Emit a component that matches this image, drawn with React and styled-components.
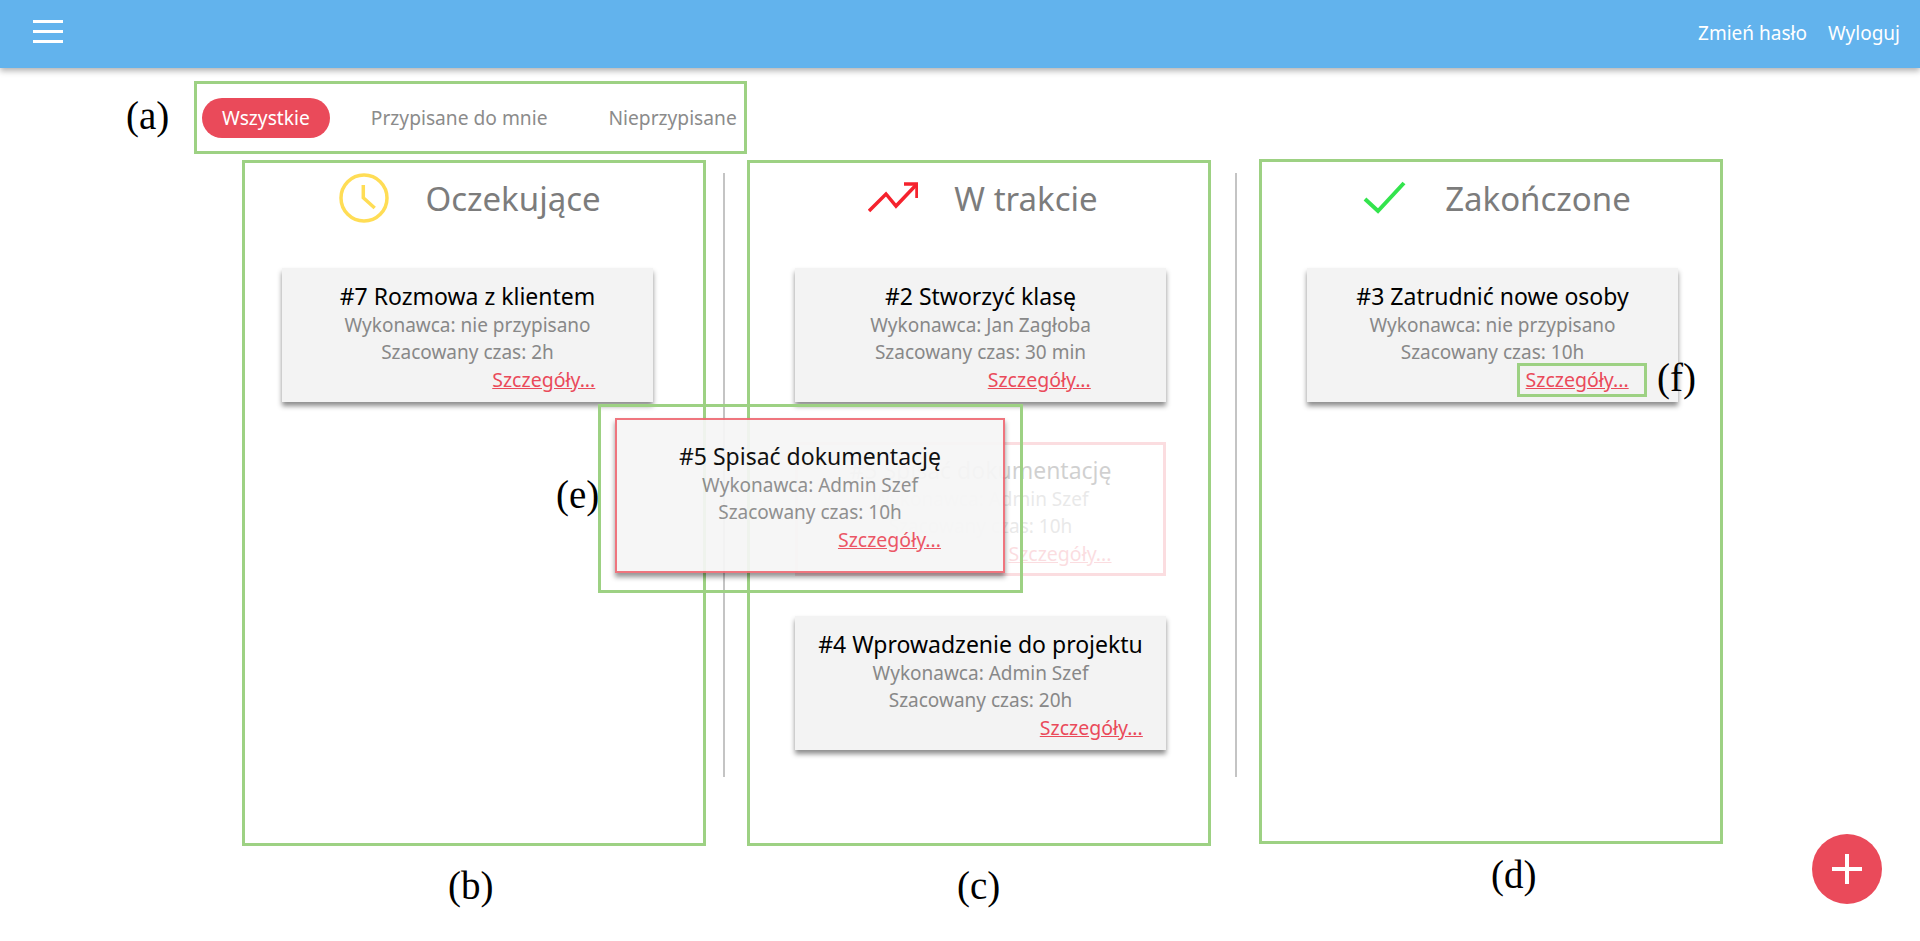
import React from 'react';
import styled, { createGlobalStyle } from 'styled-components';

const GlobalStyle = createGlobalStyle`
  html, body {
    margin: 0;
    background: #fff;
    font-family: "Noto Sans", "Open Sans", sans-serif;
  }
  * { box-sizing: border-box; }
`;

const Page = styled.div`
  position: relative;
  height: 941px;
  overflow: hidden;
`;

const TopBar = styled.header`
  height: 68px;
  background: #62b3ed;
  box-shadow: 0 3px 6px rgba(0, 0, 0, 0.3);
  display: flex;
  align-items: center;
  justify-content: space-between;
  padding: 0 20px 0 33px;
`;

const Burger = styled.div`
  width: 30px;
  display: flex;
  flex-direction: column;
  gap: 7px;
  margin-top: -5px;
  span {
    display: block;
    height: 3px;
    background: #fff;
  }
`;

const TopLinks = styled.nav`
  display: flex;
  gap: 21px;
  margin-top: -2px;
`;

const TopLink = styled.a`
  color: #fff;
  font-size: 19px;
`;

const FilterBar = styled.div`
  display: flex;
  align-items: center;
  margin: 30px 0 0 202px;
  height: 40px;
`;

const FilterPill = styled.div`
  height: 40px;
  line-height: 40px;
  padding: 0 20px;
  margin-right: 21px;
  border-radius: 20px;
  font-size: 19.2px;
  white-space: nowrap;
  color: ${p => (p.$active ? '#fff' : '#8b8b8b')};
  background: ${p => (p.$active ? '#ea4a5a' : 'transparent')};
`;

const Board = styled.main`
  display: flex;
  margin: 22px 0 0 242px;
`;

const Column = styled.section`
  width: 464px;
  height: ${p => p.$height}px;
  margin-top: ${p => p.$top}px;
  padding: ${p => 10 - p.$top}px 0 0 ${p => p.$inset - 3}px;
  border: 3px solid #9dd183;
`;

const Divider = styled.div`
  width: 2px;
  height: 604px;
  margin: 13px ${p => p.$right}px 0 ${p => p.$left}px;
  background: #c4c4c4;
`;

const ColumnInner = styled.div`
  width: 371px;
`;

const ColumnHead = styled.div`
  height: 50px;
  display: flex;
  align-items: center;
  justify-content: center;
  gap: 36px;
  padding-left: 5px;
  margin-bottom: 45px;
`;

const HeadIcon = styled.svg`
  width: 50px;
  height: 50px;
  flex: none;
`;

const HeadTitle = styled.h2`
  margin: 0;
  font-size: 33px;
  font-weight: 400;
  color: #7c7c7c;
`;

const CardStack = styled.div`
  display: flex;
  flex-direction: column;
  gap: 40px;
`;

const Card = styled.article`
  display: flex;
  justify-content: center;
  align-items: flex-start;
  width: 371px;
  height: 134px;
  padding-top: 12px;
  background: #f3f3f3;
  box-shadow: 0 4px 5px rgba(0, 0, 0, 0.45);
`;

const GhostCard = styled(Card)`
  background: #fff;
  border: 3px solid #ea4a5a;
  padding-top: 9px;
  box-shadow: none;
  opacity: 0.18;
`;

const FloatingCard = styled(Card)`
  position: absolute;
  left: 615px;
  top: 418px;
  width: 390px;
  height: 155px;
  padding-top: 20px;
  background: #f6f6f6;
  border: 2px solid #ee6b75;
  opacity: 0.93;
  z-index: 2;
`;

const CardBody = styled.div`
  display: inline-flex;
  flex-direction: column;
  text-align: center;
  white-space: nowrap;
`;

const CardTitle = styled.div`
  font-size: 23px;
  line-height: 32px;
  color: #000;
`;

const CardLine = styled.div`
  font-size: 19px;
  line-height: 27px;
  color: #888;
`;

const DetailsLink = styled.a`
  align-self: flex-end;
  font-size: 19.5px;
  line-height: 27px;
  color: #ea4a5a;
  text-decoration: underline;
`;

const AddButton = styled.button`
  position: absolute;
  left: 1812px;
  top: 834px;
  width: 70px;
  height: 70px;
  border: 0;
  padding: 0;
  border-radius: 50%;
  background: #ea4a5a;
  display: flex;
  align-items: center;
  justify-content: center;
`;

/* figure annotations, drawn on top of the screenshot */
const Mark = styled.div`
  position: absolute;
  left: ${p => p.$x}px;
  top: ${p => p.$y}px;
  width: ${p => p.$w}px;
  height: ${p => p.$h}px;
  border: 3px solid #9dd183;
  z-index: 3;
  pointer-events: none;
`;

const Label = styled.span`
  position: absolute;
  left: ${p => p.$x}px;
  top: ${p => p.$y}px;
  font-family: "Liberation Serif", serif;
  font-size: 39px;
  line-height: 44px;
  color: #000;
  z-index: 4;
`;

const ClockIcon = () => (
  <HeadIcon viewBox="0 0 50 50" fill="none" stroke="#ffdd55" strokeWidth="3.5">
    <circle cx="25" cy="25" r="23" />
    <path d="M24.3 12v12.7L35.7 35" />
  </HeadIcon>
);

const TrendIcon = () => (
  <HeadIcon viewBox="0 0 50 50" fill="none" stroke="#f5222d" strokeWidth="3.5">
    <path d="M1 38 L18 21 L28 33 L49 11" />
    <path d="M36 11 H49 V25" />
  </HeadIcon>
);

const CheckIcon = () => (
  <HeadIcon viewBox="0 0 50 50" fill="none" stroke="#33e44d" strokeWidth="4">
    <path d="M6 26 L19 38 L45 10" />
  </HeadIcon>
);

const TaskContent = ({ title, who, time }) => (
  <CardBody>
    <CardTitle>{title}</CardTitle>
    <CardLine>Wykonawca: {who}</CardLine>
    <CardLine>Szacowany czas: {time}</CardLine>
    <DetailsLink>Szczegóły...</DetailsLink>
  </CardBody>
);

const Task = props => (
  <Card>
    <TaskContent {...props} />
  </Card>
);

export default function App() {
  const spec = { title: '#5 Spisać dokumentację', who: 'Admin Szef', time: '10h' };
  return (
    <Page>
      <GlobalStyle />
      <TopBar>
        <Burger>
          <span />
          <span />
          <span />
        </Burger>
        <TopLinks>
          <TopLink>Zmień hasło</TopLink>
          <TopLink>Wyloguj</TopLink>
        </TopLinks>
      </TopBar>

      <FilterBar>
        <FilterPill $active>Wszystkie</FilterPill>
        <FilterPill>Przypisane do mnie</FilterPill>
        <FilterPill>Nieprzypisane</FilterPill>
      </FilterBar>

      <Board>
        <Column $top={0} $height={686} $inset={40}>
          <ColumnInner>
            <ColumnHead>
              <ClockIcon />
              <HeadTitle>Oczekujące</HeadTitle>
            </ColumnHead>
            <CardStack>
              <Task title="#7 Rozmowa z klientem" who="nie przypisano" time="2h" />
            </CardStack>
          </ColumnInner>
        </Column>
        <Divider $left={17} $right={22} />
        <Column $top={0} $height={686} $inset={48}>
          <ColumnInner>
            <ColumnHead>
              <TrendIcon />
              <HeadTitle>W trakcie</HeadTitle>
            </ColumnHead>
            <CardStack>
              <Task title="#2 Stworzyć klasę" who="Jan Zagłoba" time="30 min" />
              <GhostCard>
                <TaskContent {...spec} />
              </GhostCard>
              <Task title="#4 Wprowadzenie do projektu" who="Admin Szef" time="20h" />
            </CardStack>
          </ColumnInner>
        </Column>
        <Divider $left={24} $right={22} />
        <Column $top={-1} $height={685} $inset={48}>
          <ColumnInner>
            <ColumnHead>
              <CheckIcon />
              <HeadTitle>Zakończone</HeadTitle>
            </ColumnHead>
            <CardStack>
              <Task title="#3 Zatrudnić nowe osoby" who="nie przypisano" time="10h" />
            </CardStack>
          </ColumnInner>
        </Column>
      </Board>

      <FloatingCard>
        <TaskContent {...spec} />
      </FloatingCard>

      <AddButton aria-label="Dodaj">
        <svg width="30" height="30" viewBox="0 0 30 30" fill="#fff">
          <path d="M13 0h4v13h13v4H17v13h-4V17H0v-4h13z" />
        </svg>
      </AddButton>

      <Mark $x={194} $y={81} $w={553} $h={73} />
      <Mark $x={598} $y={404} $w={425} $h={189} />
      <Mark $x={1517} $y={363} $w={130} $h={34} />

      <Label $x={126} $y={94}>(a)</Label>
      <Label $x={448} $y={864}>(b)</Label>
      <Label $x={957} $y={864}>(c)</Label>
      <Label $x={1491} $y={853}>(d)</Label>
      <Label $x={556} $y={473}>(e)</Label>
      <Label $x={1657} $y={356}>(f)</Label>
    </Page>
  );
}
